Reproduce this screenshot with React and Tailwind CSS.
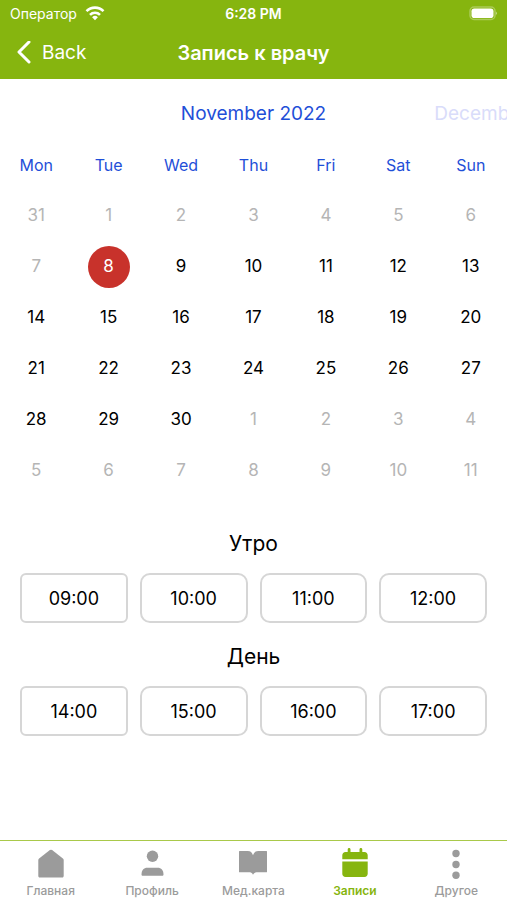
import { useState } from "react";
import clsx from "clsx";

const weekDays = ["Mon", "Tue", "Wed", "Thu", "Fri", "Sat", "Sun"];

// Six weeks starting on Monday, October 31, 2022
const firstDay = new Date(2022, 9, 31);
const weeks = Array.from({ length: 6 }, (_, week) =>
  Array.from({ length: 7 }, (_, day) => {
    const date = new Date(firstDay);
    date.setDate(firstDay.getDate() + week * 7 + day);
    return date;
  })
);

const today = new Date(2022, 10, 8);

const slots = [
  { title: "Утро", times: ["09:00", "10:00", "11:00", "12:00"] },
  { title: "День", times: ["14:00", "15:00", "16:00", "17:00"] },
];

const tabs = [
  { label: "Главная", icon: HomeIcon },
  { label: "Профиль", icon: ProfileIcon },
  { label: "Мед.карта", icon: BookIcon },
  { label: "Записи", icon: CalendarIcon, active: true },
  { label: "Другое", icon: MoreIcon },
];

function HomeIcon() {
  return (
    <svg className="w-8 h-8" viewBox="0 0 32 32" fill="currentColor" aria-hidden="true">
      <path d="M14.9 3.100a1.800 1.800 0 0 1 2.200 0l10.800 8.400c.5.4.8.9.8 1.500v16c0 .9-.6 1.500-1.500 1.500H4.800c-.9 0-1.500-.6-1.500-1.500V13c0-.6.3-1.100.8-1.500z" />
    </svg>
  );
}

function ProfileIcon() {
  return (
    <svg className="w-8 h-8" viewBox="0 0 32 32" fill="currentColor" aria-hidden="true">
      <circle cx="16.500" cy="9.300" r="5.700" />
      <path d="M5.500 27.500c0-4.500 2.300-6.800 5.800-6.800h10.400c3.500 0 5.800 2.300 5.800 6.800 0 .9-.5 1.300-1.300 1.300H6.800c-.8 0-1.300-.4-1.300-1.300z" />
    </svg>
  );
}

function BookIcon() {
  return (
    <svg className="w-8 h-8" viewBox="0 0 32 32" fill="currentColor" aria-hidden="true">
      <path d="M2 4.600C2 4.200 2.200 4 2.600 4h8.200c2.800 0 4.200 1.500 5.200 4.200C17 5.500 18.400 4 21.200 4h8.200c.4 0 .6.200.6.600v20.100c0 .4-.2.6-.6.6h-8.900c-2.400 0-3.700.5-4.500 2.500-.8-2-2.100-2.500-4.500-2.500H2.600c-.4 0-.6-.2-.6-.6z" />
    </svg>
  );
}

function CalendarIcon() {
  return (
    <svg className="w-8 h-8" viewBox="0 0 32 32" fill="currentColor" aria-hidden="true">
      <path d="M8.700 2.500c0-1 .6-1.500 1.400-1.500s1.400.5 1.400 1.500V5h9V2.500c0-1 .6-1.500 1.400-1.500s1.400.5 1.400 1.500V5h2.200c1.900 0 3.200 1.300 3.200 3.200v4H3.300v-4C3.300 6.300 4.600 5 6.500 5h2.200z" />
      <path d="M3.300 14.400h25.400v12.400c0 1.900-1.300 3.200-3.200 3.200h-19c-1.900 0-3.200-1.300-3.200-3.200z" />
    </svg>
  );
}

function MoreIcon() {
  return (
    <svg className="w-8 h-8" viewBox="0 0 32 32" fill="currentColor" aria-hidden="true">
      <circle cx="16" cy="6.500" r="3.700" />
      <circle cx="16" cy="17.500" r="3.700" />
      <circle cx="16" cy="28.300" r="3.700" />
    </svg>
  );
}

function StatusBar() {
  return (
    <div className="grid grid-cols-3 items-center h-7 px-2.5">
      <div className="flex items-center gap-2 text-sm">
        <span>Оператор</span>
        <svg className="w-5 h-4" viewBox="0 0 20 16" fill="none" stroke="currentColor" strokeWidth="2.600" aria-hidden="true">
          <path d="M1.500 5.200a12 12 0 0 1 17 0" />
          <path d="M5 8.800a7 7 0 0 1 10 0" />
          <path d="M10 14.200l-2.900-2.900a4.100 4.100 0 0 1 5.800 0z" fill="currentColor" stroke="none" />
        </svg>
      </div>
      <div className="text-center text-sm font-semibold whitespace-nowrap">6:28 PM</div>
      <svg className="justify-self-end w-8 h-4" viewBox="0 0 32 16" aria-hidden="true">
        <rect x="5" y="1" width="25" height="12.500" rx="4" fill="none" stroke="#fff" strokeOpacity="0.3" strokeWidth="1.500" />
        <rect x="6.500" y="2.500" width="22" height="9.500" rx="2.800" fill="#fff" />
        <path d="M30.900 5.400c1.300.8 1.300 2.900 0 3.700z" fill="#fff" fillOpacity="0.5" />
      </svg>
    </div>
  );
}

function NavBar() {
  return (
    <div className="grid grid-cols-3 items-center flex-1 px-4 pb-0.5">
      <button className="flex items-center gap-2.5 text-[19px] leading-8">
        <svg className="w-4 h-6" viewBox="0 0 16 24" fill="none" stroke="currentColor" strokeWidth="3" strokeLinecap="round" strokeLinejoin="round" aria-hidden="true">
          <path d="M13 1L3 11l10 10" />
        </svg>
        Back
      </button>
      <h1 className="text-center text-xl leading-8 font-semibold whitespace-nowrap">Запись к врачу</h1>
    </div>
  );
}

function Calendar({ selected, onSelect }) {
  return (
    <section>
      {/* Month carousel, each slide takes half of the screen */}
      <div className="flex h-[60px] pt-2.5 justify-center items-center overflow-hidden text-[19px] text-center whitespace-nowrap">
        <span className="w-1/2 shrink-0" />
        <h2 className="w-1/2 shrink-0 text-[#1f4fd8]">November 2022</h2>
        <span className="w-1/2 shrink-0 text-[#d9dcfa]">December 2022</span>
      </div>
      <table className="w-full table-fixed text-center text-[17px]">
        <thead>
          <tr className="h-[51px] text-base">
            {weekDays.map((day) => (
              <th key={day} scope="col" className="p-0 font-normal text-[#1f4fd8]">
                {day}
              </th>
            ))}
          </tr>
        </thead>
        <tbody>
          {weeks.map((week) => (
            <tr key={week[0].getTime()} className="h-[51px]">
              {week.map((date) => {
                const disabled = date < today || date.getMonth() !== today.getMonth();
                const isSelected = date.getTime() === selected;
                return (
                  <td key={date.getTime()} className="p-0">
                    <button
                      disabled={disabled}
                      onClick={() => onSelect(date.getTime())}
                      className={clsx(
                        "block mx-auto size-[42px] pt-px rounded-full",
                        isSelected && "bg-[#c8322b] text-white",
                        !isSelected && (disabled ? "text-[#b5b5b5]" : "text-black")
                      )}
                    >
                      {date.getDate()}
                    </button>
                  </td>
                );
              })}
            </tr>
          ))}
        </tbody>
      </table>
    </section>
  );
}

function SlotGroup({ title, times }) {
  return (
    <section>
      <h3 className="h-[63px] pt-[18px] text-center text-[21px] leading-8">{title}</h3>
      <div className="grid grid-cols-4 gap-3">
        {times.map((time) => (
          <button
            key={time}
            className="h-[50px] pt-0.5 rounded-[10px] first:rounded-md border-2 border-[#d6d6d6] text-lg"
          >
            {time}
          </button>
        ))}
      </div>
    </section>
  );
}

function TabBar() {
  return (
    <nav className="grid grid-cols-5 h-[60px] border-t border-[#a9c94a]">
      {tabs.map(({ label, icon: Icon, active }) => (
        <a
          key={label}
          href="#"
          aria-current={active ? "page" : undefined}
          className={clsx(
            "flex flex-col items-center pt-1.5 text-xs leading-6",
            active ? "font-semibold text-[#86b50f]" : "font-medium text-[#9b9b9b]"
          )}
        >
          <Icon />
          {label}
        </a>
      ))}
    </nav>
  );
}

export default function App() {
  const [selected, setSelected] = useState(today.getTime());

  return (
    <div className="flex flex-col min-h-screen bg-white text-black font-['Inter','Liberation_Sans',sans-serif]">
      <header className="flex flex-col h-[79px] bg-[#86b50f] text-white">
        <StatusBar />
        <NavBar />
      </header>
      <main className="flex-1">
        <Calendar selected={selected} onSelect={setSelected} />
        <div className="px-5 pt-[14px]">
          {slots.map((group) => (
            <SlotGroup key={group.title} {...group} />
          ))}
        </div>
      </main>
      <TabBar />
    </div>
  );
}
